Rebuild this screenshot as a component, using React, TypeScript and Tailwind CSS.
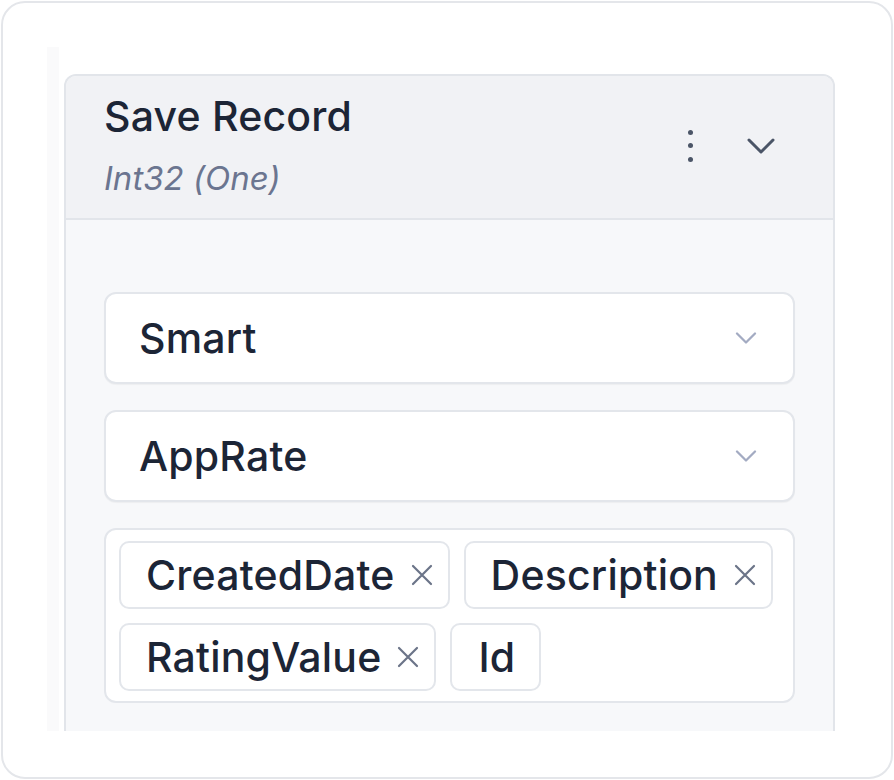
import React from 'react';

const fields = [
  { label: 'CreatedDate', removable: true },
  { label: 'Description', removable: true },
  { label: 'RatingValue', removable: true },
  { label: 'Id', removable: false },
];

function Chevron({ className }: { className?: string }) {
  return (
    <svg viewBox="0 0 28 16" className={className} fill="none" stroke="currentColor" strokeWidth="3" strokeLinecap="round" strokeLinejoin="round">
      <path d="M2 2l12 12L26 2" />
    </svg>
  );
}

function Select({ value }: { value: string }) {
  return (
    <div className="flex h-[92px] items-center justify-between rounded-[12px] border-2 border-[#e3e6eb] bg-white pl-[33px] pr-[36px] shadow-[0_1px_1px_rgba(0,0,0,0.04)]">
      <span className="text-[41px] font-medium leading-[48px] tracking-[0.2px] text-[#1c2536]">{value}</span>
      <Chevron className="h-[12px] w-[22px] text-[#a3abc2]" />
    </div>
  );
}

function Tag({ label, removable }: { label: string; removable: boolean }) {
  return (
    <div className={`flex h-[68px] items-center rounded-[10px] border-2 border-[#e3e6eb] bg-white ${removable ? 'pl-[25px] pr-[15px]' : 'pl-[26px] pr-[24px]'}`}>
      <span className="text-[41px] font-medium leading-[48px] tracking-[0.2px] text-[#1c2536]">{label}</span>
      {removable && (
        <svg viewBox="0 0 22 22" className="ml-[16px] h-[22px] w-[22px] text-[#6b7488]" fill="none" stroke="currentColor" strokeWidth="2.2" strokeLinecap="round">
          <path d="M2 2l18 18M20 2L2 20" />
        </svg>
      )}
    </div>
  );
}

export default function App() {
  return (
    <div className="h-[780px] w-[894px] bg-white p-px" style={{ fontFamily: 'Inter, "Noto Sans", sans-serif' }}>
      <div className="h-[778px] w-[892px] overflow-hidden rounded-[24px] border-2 border-[#e4e6ea] bg-white">
        <div className="ml-[44px] mt-[44px] flex h-[684px]">
          {/* faint strip on the left */}
          <div className="w-[12px] bg-[#fafafb]" />

          {/* Card */}
          <div className="ml-[5px] mt-[27px] flex w-[771px] flex-col rounded-t-[12px] border-2 border-b-0 border-[#e2e5ea] bg-[#f7f8fa]">
            <div className="flex items-center justify-between rounded-t-[10px] border-b-2 border-[#e2e5ea] bg-[#f1f2f5] pb-[19px] pl-[38px] pr-[54px] pt-[16px]">
              <div>
                <div className="text-[41px] font-medium leading-[48px] tracking-[0.2px] text-[#1c2536]">Save Record</div>
                <div className="mt-[18px] text-[33px] italic leading-[41px] text-[#6b7590]">Int32 (One)</div>
              </div>
              <div className="flex items-center gap-[43px]">
                <div className="flex w-[20px] flex-col items-center gap-[8.5px]">
                  <span className="h-[5px] w-[5px] rounded-full bg-[#4b5567]" />
                  <span className="h-[5px] w-[5px] rounded-full bg-[#4b5567]" />
                  <span className="h-[5px] w-[5px] rounded-full bg-[#4b5567]" />
                </div>
                <div className="flex w-[36px] justify-center">
                  <Chevron className="h-[16px] w-[28px] text-[#4b5567]" />
                </div>
              </div>
            </div>

            <div className="flex flex-1 flex-col gap-[26px] px-[38px] pt-[72px]">
              <Select value="Smart" />
              <Select value="AppRate" />
              <div className="flex flex-wrap gap-[14px] rounded-[12px] border-2 border-[#e3e6eb] bg-white pb-[10px] pl-[13px] pr-[13px] pt-[11px]">
                {fields.map((f) => (
                  <Tag key={f.label} label={f.label} removable={f.removable} />
                ))}
              </div>
            </div>
          </div>
        </div>
      </div>
    </div>
  );
}
